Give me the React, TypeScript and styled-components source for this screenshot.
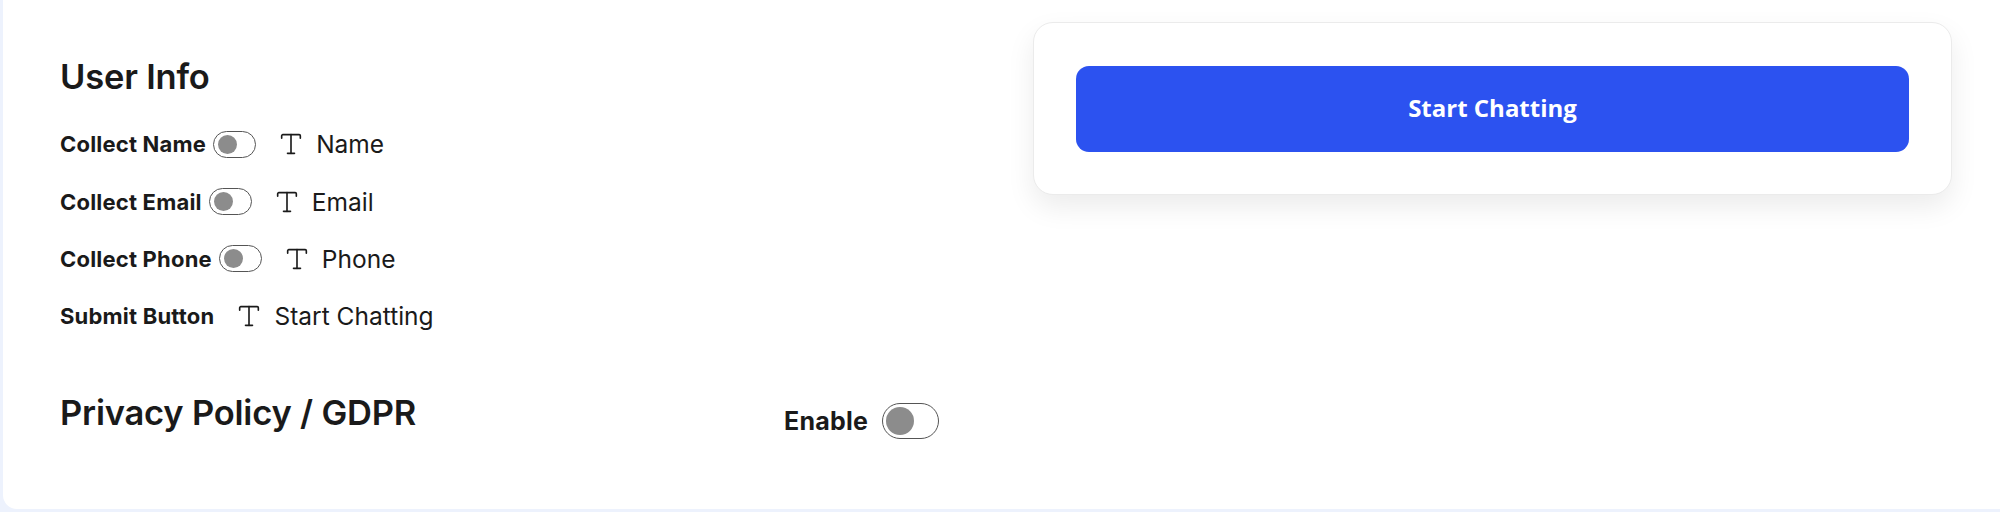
import React from "react";
import styled, { createGlobalStyle } from "styled-components";
import { Type } from "lucide-react";

const GlobalStyle = createGlobalStyle`
  html, body {
    margin: 0;
    padding: 0;
    background: #edf2fd;
  }
  body {
    font-family: Inter, "Noto Sans", sans-serif;
    color: #1a1a1a;
  }
`;

const Panel = styled.div`
  margin-left: 3px;
  height: 509px;
  box-sizing: border-box;
  background: #ffffff;
  border-bottom-left-radius: 14px;
  display: grid;
  grid-template-columns: 879px 919px;
  column-gap: 94px;
  align-items: start;
  padding: 22px 48px 0 57px;
`;

const LeftColumn = styled.div`
  display: flex;
  flex-direction: column;
  padding-top: 34px;
`;

const SectionTitle = styled.h2`
  margin: 0;
  font-family: Inter, sans-serif;
  font-size: 34.5px;
  line-height: 1.2;
  font-weight: 600;
  letter-spacing: -0.2px;
  color: #1a1a1a;
`;

const Rows = styled.div`
  display: flex;
  flex-direction: column;
  gap: 27.3px;
  margin-top: 32px;
`;

const Row = styled.div`
  display: flex;
  align-items: center;
  height: 30px;
`;

const FieldLabel = styled.span<{ $big?: boolean }>`
  font-family: Inter, sans-serif;
  font-size: ${(p) => (p.$big ? "25px" : "22px")};
  font-weight: 700;
  letter-spacing: 0.2px;
  color: #1a1a1a;
  white-space: nowrap;
`;

const ToggleTrack = styled.span<{ $size: "sm" | "lg" }>`
  display: inline-flex;
  align-items: center;
  box-sizing: border-box;
  flex: none;
  width: ${(p) => (p.$size === "lg" ? "57px" : "43px")};
  height: ${(p) => (p.$size === "lg" ? "36px" : "27px")};
  border: 1px solid #555555;
  border-radius: 999px;
  background: #ffffff;
  padding-left: ${(p) => (p.$size === "lg" ? "3px" : "4px")};
  margin-left: ${(p) => (p.$size === "lg" ? "14px" : "7px")};
`;

const ToggleKnob = styled.span<{ $size: "sm" | "lg" }>`
  display: block;
  width: ${(p) => (p.$size === "lg" ? "28px" : "19px")};
  height: ${(p) => (p.$size === "lg" ? "28px" : "19px")};
  border-radius: 50%;
  background: #8c8c8c;
`;

const ValueGroup = styled.span`
  display: inline-flex;
  align-items: center;
  gap: 11px;
  margin-left: 21px;
`;

const ValueText = styled.span`
  font-family: Inter, sans-serif;
  font-size: 24.5px;
  font-weight: 400;
  color: #1a1a1a;
  white-space: nowrap;
`;

const PrivacyRow = styled.div`
  display: flex;
  align-items: flex-start;
  justify-content: space-between;
  margin-top: 61px;
`;

const EnableGroup = styled.div`
  display: flex;
  align-items: center;
  padding-top: 11px;
`;

const PreviewCard = styled.div`
  box-sizing: border-box;
  height: 173px;
  border: 1px solid #ebebeb;
  border-radius: 20px;
  background: #ffffff;
  box-shadow: 0 12px 28px rgba(0, 0, 0, 0.08);
  padding: 43px 42px;
`;

const StartButton = styled.button`
  width: 100%;
  height: 86px;
  border: none;
  border-radius: 13px;
  background: #2c52f0;
  color: #ffffff;
  font-family: "Open Sans", sans-serif;
  font-weight: 700;
  font-size: 24px;
  padding: 0 0 4px;
  cursor: pointer;
`;

function Toggle({ size = "sm" }: { size?: "sm" | "lg" }) {
  return (
    <ToggleTrack $size={size} role="switch" aria-checked={false}>
      <ToggleKnob $size={size} />
    </ToggleTrack>
  );
}

type Field = { label: string; value: string; toggle: boolean };

const fields: Field[] = [
  { label: "Collect Name", value: "Name", toggle: true },
  { label: "Collect Email", value: "Email", toggle: true },
  { label: "Collect Phone", value: "Phone", toggle: true },
  { label: "Submit Button", value: "Start Chatting", toggle: false },
];

export default function App() {
  return (
    <>
      <GlobalStyle />
      <Panel>
        <LeftColumn>
          <SectionTitle>User Info</SectionTitle>
          <Rows>
            {fields.map((f) => (
              <Row key={f.label}>
                <FieldLabel>{f.label}</FieldLabel>
                {f.toggle && <Toggle />}
                <ValueGroup>
                  <Type size={28} strokeWidth={1.4} color="#1a1a1a" />
                  <ValueText>{f.value}</ValueText>
                </ValueGroup>
              </Row>
            ))}
          </Rows>
          <PrivacyRow>
            <SectionTitle>Privacy Policy / GDPR</SectionTitle>
            <EnableGroup>
              <FieldLabel $big>Enable</FieldLabel>
              <Toggle size="lg" />
            </EnableGroup>
          </PrivacyRow>
        </LeftColumn>
        <PreviewCard>
          <StartButton>Start Chatting</StartButton>
        </PreviewCard>
      </Panel>
    </>
  );
}
